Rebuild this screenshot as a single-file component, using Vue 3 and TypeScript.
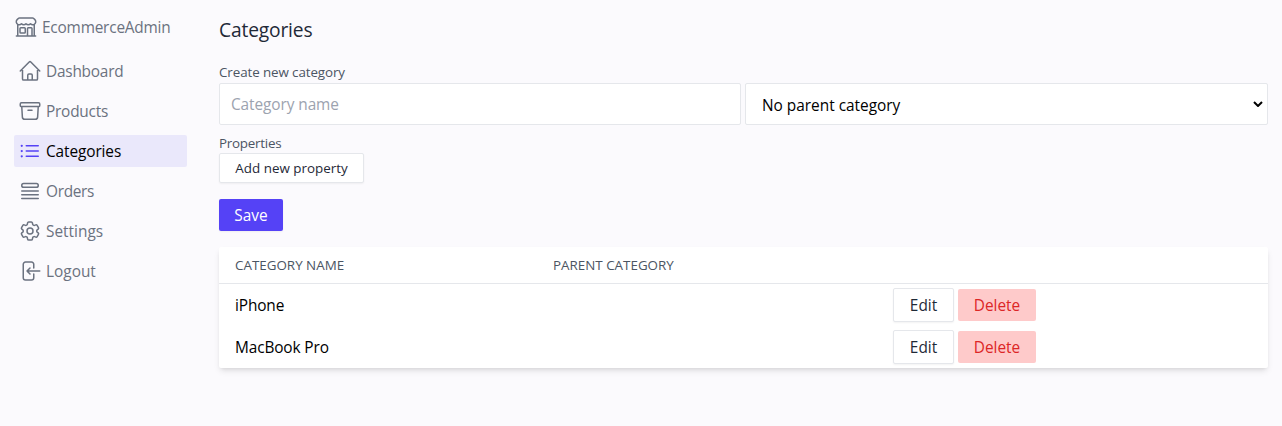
<script setup lang="ts">
interface NavItem {
  label: string
  icon: string
  cls: string
}

const storeIcon =
  'M13.5 21v-7.5a.75.75 0 01.75-.75h3a.75.75 0 01.75.75V21m-4.5 0H2.36m11.14 0H18m0 0h3.64m-1.39 0V9.349m-16.5 11.65V9.35m0 0a3.001 3.001 0 003.75-.615A2.993 2.993 0 009.75 9.75c.896 0 1.7-.393 2.25-1.016a2.993 2.993 0 002.25 1.016c.896 0 1.7-.393 2.25-1.016a3.001 3.001 0 003.75.614m-16.5 0a3.004 3.004 0 01-.621-4.72L4.318 3.44A1.5 1.5 0 015.378 3h13.243a1.5 1.5 0 011.06.44l1.19 1.189a3 3 0 01-.621 4.72m-13.5 8.65h3.75a.75.75 0 00.75-.75V13.5a.75.75 0 00-.75-.75H6.75a.75.75 0 00-.75.75v3.75c0 .415.336.75.75.75z'

const navItems: NavItem[] = [
  {
    label: 'Dashboard',
    cls: 'dashboard',
    icon: 'M2.25 12l8.954-8.955c.44-.439 1.152-.439 1.591 0L21.75 12M4.5 9.75v10.125c0 .621.504 1.125 1.125 1.125H9.75v-4.875c0-.621.504-1.125 1.125-1.125h2.25c.621 0 1.125.504 1.125 1.125V21h4.125c.621 0 1.125-.504 1.125-1.125V9.75M8.25 21h8.25',
  },
  {
    label: 'Products',
    cls: 'products',
    icon: 'M20.25 7.5l-.625 10.632a2.25 2.25 0 01-2.247 2.118H6.622a2.25 2.25 0 01-2.247-2.118L3.75 7.5M10 11.25h4M3.375 7.5h17.25c.621 0 1.125-.504 1.125-1.125v-1.5c0-.621-.504-1.125-1.125-1.125H3.375c-.621 0-1.125.504-1.125 1.125v1.5c0 .621.504 1.125 1.125 1.125z',
  },
  {
    label: 'Categories',
    cls: 'active',
    icon: 'M8.25 6.75h12M8.25 12h12m-12 5.25h12M3.75 6.75h.007v.008H3.75V6.75zm.375 0a.375.375 0 11-.75 0 .375.375 0 01.75 0zM3.75 12h.007v.008H3.75V12zm.375 0a.375.375 0 11-.75 0 .375.375 0 01.75 0zm-.375 5.25h.007v.008H3.75v-.008zm.375 0a.375.375 0 11-.75 0 .375.375 0 01.75 0z',
  },
  {
    label: 'Orders',
    cls: 'orders',
    icon: 'M3.75 12h16.5m-16.5 3.75h16.5M3.75 19.5h16.5M5.625 4.5h12.75a1.875 1.875 0 010 3.75H5.625a1.875 1.875 0 010-3.75z',
  },
  {
    label: 'Settings',
    cls: 'settings',
    icon: 'M9.594 3.94c.09-.542.56-.94 1.11-.94h2.593c.55 0 1.02.398 1.11.94l.213 1.281c.063.374.313.686.645.87.074.04.147.083.22.127.324.196.72.257 1.075.124l1.217-.456a1.125 1.125 0 011.37.49l1.296 2.247a1.125 1.125 0 01-.26 1.431l-1.003.827c-.293.24-.438.613-.431.992a6.759 6.759 0 010 .255c-.007.378.138.75.43.99l1.005.828c.424.35.534.954.26 1.43l-1.298 2.247a1.125 1.125 0 01-1.369.491l-1.217-.456c-.355-.133-.75-.072-1.076.124a6.57 6.57 0 01-.22.128c-.331.183-.581.495-.644.869l-.213 1.28c-.09.543-.56.941-1.11.941h-2.594c-.55 0-1.02-.398-1.11-.94l-.213-1.281c-.062-.374-.312-.686-.644-.87a6.52 6.52 0 01-.22-.127c-.325-.196-.72-.257-1.076-.124l-1.217.456a1.125 1.125 0 01-1.369-.49l-1.297-2.247a1.125 1.125 0 01.26-1.431l1.004-.827c.292-.24.437-.613.43-.992a6.932 6.932 0 010-.255c.007-.378-.138-.75-.43-.99l-1.004-.828a1.125 1.125 0 01-.26-1.43l1.297-2.247a1.125 1.125 0 011.37-.491l1.216.456c.356.133.751.072 1.076-.124.072-.044.146-.087.22-.128.332-.183.582-.495.644-.869l.214-1.281zM15 12a3 3 0 11-6 0 3 3 0 016 0z',
  },
  {
    label: 'Logout',
    cls: 'logout',
    icon: 'M15.75 9V5.25A2.25 2.25 0 0013.5 3h-6a2.25 2.25 0 00-2.25 2.25v13.5A2.25 2.25 0 007.5 21h6a2.25 2.25 0 002.25-2.25V15M12 9l-3 3m0 0l3 3m-3-3h12.75',
  },
]

const categories = [
  { name: 'iPhone', parent: '' },
  { name: 'MacBook Pro', parent: '' },
]
</script>

<template>
  <div class="page">
    <aside>
      <a class="brand">
        <svg class="icon" viewBox="0 0 24 24"><path :d="storeIcon" /></svg>
        <span>EcommerceAdmin</span>
      </a>
      <nav>
        <a v-for="item in navItems" :key="item.label" class="link" :class="item.cls">
          <svg class="icon" viewBox="0 0 24 24"><path :d="item.icon" /></svg>
          <span>{{ item.label }}</span>
        </a>
      </nav>
    </aside>
    <main>
      <h1>Categories</h1>
      <form @submit.prevent>
        <label class="create">Create new category</label>
        <div class="fields">
          <input type="text" placeholder="Category name" />
          <div class="select">
            <span>No parent category</span>
            <svg class="chevron" viewBox="0 0 10 6"><path d="M1 1l4 4 4-4" /></svg>
          </div>
        </div>
        <label class="props">Properties</label>
        <button type="button" class="btn outline small"><span>Add new property</span></button>
        <button type="submit" class="btn primary"><span>Save</span></button>
      </form>
      <section class="table">
        <div class="row head">
          <span>Category name</span>
          <span>Parent category</span>
          <span></span>
        </div>
        <div v-for="c in categories" :key="c.name" class="row">
          <span class="name">{{ c.name }}</span>
          <span>{{ c.parent }}</span>
          <div class="actions">
            <button class="btn outline edit"><span>Edit</span></button>
            <button class="btn red"><span>Delete</span></button>
          </div>
        </div>
      </section>
    </main>
  </div>
</template>

<style>
body {
  background: #fbfafd;
}
</style>

<style scoped>
* {
  box-sizing: border-box;
}
.page {
  display: flex;
  height: 426px;
  overflow: hidden;
  background: #fbfafd;
  font-family: 'Segoe UI', 'Open Sans', 'Noto Sans', sans-serif;
  font-size: 15.4px;
  line-height: 24px;
  color: #000;
}
aside {
  width: 187px;
  padding: 15px 0 0 14px;
  color: #6b7280;
}
.brand {
  display: flex;
  gap: 4px;
  height: 24px;
  margin-bottom: 16px;
  letter-spacing: -0.2px;
}
.brand span,
.link span {
  padding-top: 1px;
}
.icon {
  width: 24px;
  height: 24px;
  flex: none;
  fill: none;
  stroke: currentColor;
  stroke-width: 1.5;
  stroke-linecap: round;
  stroke-linejoin: round;
}
nav {
  display: flex;
  flex-direction: column;
  gap: 8px;
}
.link {
  display: flex;
  gap: 4px;
  height: 32px;
  padding: 4px;
  border-radius: 2px;
}
.dashboard,
.products {
  letter-spacing: -0.22px;
}
.orders {
  letter-spacing: -0.3px;
}
.active {
  background: #eae8fb;
  color: #000;
  letter-spacing: -0.1px;
}
.active .icon {
  color: #5542f6;
}
main {
  flex: 1;
  padding: 16px 14px 0 32px;
}
h1 {
  margin: 0 0 16px;
  font-size: 19.2px;
  font-weight: 400;
  line-height: 28px;
  letter-spacing: -0.15px;
  color: #1f2937;
}
label {
  display: block;
  height: 20px;
  font-size: 13.4px;
  line-height: 20px;
  color: #4b5563;
}
.create {
  margin-top: 18px;
  margin-bottom: 1px;
  letter-spacing: -0.1px;
}
.props {
  letter-spacing: -0.25px;
}
.fields {
  display: grid;
  grid-template-columns: 522px 523px;
  gap: 4px;
  margin-bottom: 8px;
}
input,
.select {
  min-width: 0;
  height: 42px;
  border: 1px solid #e5e7eb;
  border-radius: 2px;
  background: #fff;
  font: inherit;
}
input {
  padding: 1px 11px 0;
  letter-spacing: -0.08px;
  outline: none;
}
input::placeholder {
  color: #9ca3af;
  opacity: 1;
}
.select {
  display: flex;
  align-items: center;
  justify-content: space-between;
  padding: 3px 4px 0 16px;
}
.chevron {
  width: 10px;
  height: 6px;
  margin-top: -4px;
  fill: none;
  stroke: #000;
  stroke-width: 2;
}
.btn {
  display: flex;
  align-items: center;
  justify-content: center;
  height: 32px;
  padding: 2px 0 0;
  border: 0;
  border-radius: 2px;
  font: inherit;
  white-space: nowrap;
  box-shadow: 0 1px 2px rgba(0, 0, 0, 0.05);
}
.outline {
  border: 1px solid #e5e7eb;
  background: #fff;
  color: #1f2937;
}
.small {
  width: 145px;
  height: 30px;
  margin-bottom: 16px;
  padding: 0;
  font-size: 13.4px;
}
.primary {
  width: 64px;
  margin-bottom: 16px;
  background: #5542f6;
  color: #fff;
}
.table {
  height: 121px;
  border-radius: 2px;
  background: #fff;
  box-shadow: 0 4px 6px -1px rgba(0, 0, 0, 0.1), 0 2px 4px -2px rgba(0, 0, 0, 0.1);
}
.row {
  display: grid;
  grid-template-columns: 318px 340px 1fr;
  align-items: center;
  height: 42px;
  padding-left: 16px;
}
.name {
  padding-top: 2px;
  letter-spacing: -0.12px;
}
.head {
  height: 37px;
  border-bottom: 1px solid #e5e7eb;
  font-size: 13.4px;
  text-transform: uppercase;
  color: #4b5563;
}
.actions {
  display: flex;
  align-items: center;
  gap: 4px;
}
.edit {
  width: 61px;
  height: 34px;
}
.red {
  width: 78px;
  background: #fecaca;
  color: #dc2626;
  box-shadow: none;
}
</style>
